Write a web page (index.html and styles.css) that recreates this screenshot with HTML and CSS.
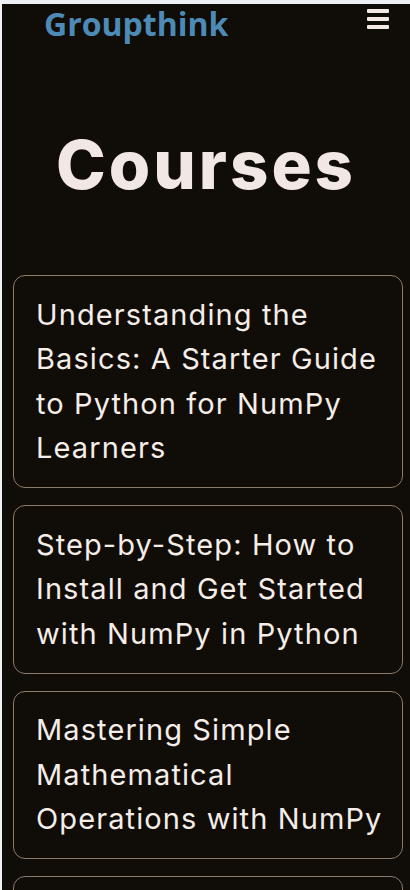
FILE: index.html
```
<!DOCTYPE html>
<html lang="en">
<head>
<meta charset="utf-8">
<title>Groupthink - Courses</title>
<link rel="stylesheet" href="styles.css">
</head>
<body>
<div class="page">
  <header class="topbar">
    <a class="logo" href="#">Groupthink</a>
    <button class="menu" aria-label="Menu">
      <svg width="22" height="20" viewBox="0 0 22 20"><rect x="0" y="0" width="22" height="4" rx="1"/><rect x="0" y="8" width="22" height="4" rx="1"/><rect x="0" y="16" width="22" height="4" rx="1"/></svg>
    </button>
  </header>
  <h1 class="title">Courses</h1>
  <div class="list">
    <a class="card" href="#">Understanding the Basics: A Starter Guide to Python for NumPy Learners</a>
    <a class="card" href="#">Step-by-Step: How to Install and Get Started with NumPy in Python</a>
    <a class="card" href="#">Mastering Simple Mathematical Operations with NumPy</a>
    <a class="card" href="#">Exploring Arrays and Indexing in NumPy</a>
  </div>
</div>
</body>
</html>
```
FILE: styles.css
```
html, body {
  margin: 0;
  padding: 0;
  background: #eef0f4;
  overflow: hidden;
}
.page {
  margin: 4px 0 0 2px;
  background: #100c08;
  min-height: 900px;
}
.topbar {
  display: flex;
  justify-content: space-between;
  align-items: flex-start;
  height: 40px;
}
.logo {
  margin-left: 42px;
  font-family: "Open Sans", sans-serif;
  font-weight: 700;
  font-size: 32px;
  line-height: 40px;
  color: #4d8ab5;
  text-decoration: none;
  letter-spacing: 0;
}
.menu {
  background: none;
  border: 0;
  padding: 0;
  margin: 5px 21px 0 0;
  fill: #f3e9e3;
  line-height: 0;
}
.title {
  margin: 81px 0 0;
  text-align: center;
  font-family: "Inter", sans-serif;
  font-weight: 800;
  font-size: 67px;
  line-height: 80px;
  color: #f2e8e3;
  letter-spacing: 3px;
}
.list {
  display: flex;
  flex-direction: column;
  gap: 17px;
  padding: 70px 7px 0 11px;
}
.card {
  display: block;
  border: 1px solid #8b7b6b;
  border-radius: 12px;
  padding: 16.5px 12px 16.5px 22px;
  font-family: "Inter", sans-serif;
  font-weight: 400;
  font-size: 29px;
  line-height: 44.5px;
  letter-spacing: 1.1px;
  color: #f5ede6;
  text-decoration: none;
}
```
